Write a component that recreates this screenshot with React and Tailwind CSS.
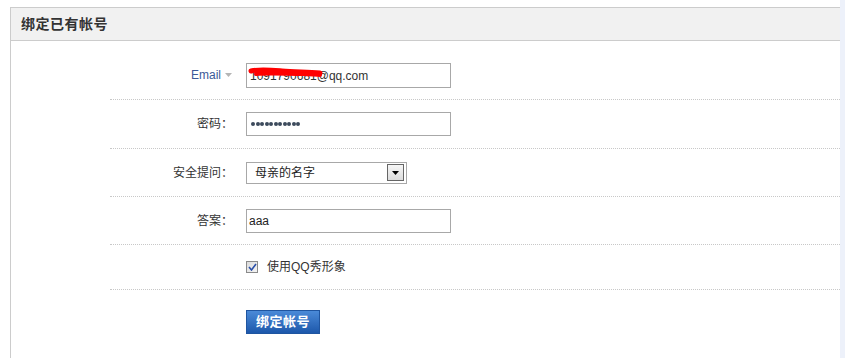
import React from "react";

const cn = { fontFamily: '"Liberation Sans", "Noto Sans CJK SC", sans-serif' };

function Row({ label, children, h = "h-[48px]", last }) {
  return (
    <div className={`flex items-center ${h} ${last ? "" : "border-b border-dotted border-[#c8c8c8]"}`}>
      <div className="w-[123px] text-right text-[12px] text-[#333]">{label}</div>
      <div className="ml-[13px] flex items-center">{children}</div>
    </div>
  );
}

export default function App() {
  return (
    <div className="w-[845px] h-[358px] bg-[#edf1fa] flex" style={cn}>
      <div className="w-[840px] h-full bg-white pt-[7px] pl-[10px]">
        <div className="h-full border-l border-t border-[#cccccc] flex flex-col">
          <div className="h-[33px] bg-[#f1f1f1] border-b border-[#cccccc] flex items-center pl-[10px]">
            <span className="text-[14px] font-bold text-[#333] tracking-[0.5px]">绑定已有帐号</span>
          </div>
          <div className="pl-[99px] pt-[10px]">
            <Row h="h-[49px]" label={
              <span className="inline-flex items-center justify-end">
                <span className="text-[#3b5998]">Email</span>
                <svg width="9" height="6" className="ml-[3px]" viewBox="0 0 9 6"><path d="M1 1h7l-3.5 4z" fill="#b5b5b5" /></svg>
              </span>
            }>
              <div className="relative w-[205px] h-[25px] border border-[#a8a8a8] bg-white flex items-center pl-[3px] pt-[2px] text-[12px] text-[#333]">
                1091790681@qq.com
                <svg className="absolute left-[1px] top-[3px]" width="76" height="12" viewBox="0 0 76 12">
                  <path d="M3 4 C12 2, 22 3, 34 4 C46 5, 58 5, 72 6" stroke="#ff0000" strokeWidth="5" fill="none" strokeLinecap="round" />
                  <path d="M8 7 C22 6, 40 7, 55 7 C62 7, 68 8, 72 8" stroke="#ff0000" strokeWidth="4" fill="none" strokeLinecap="round" />
                </svg>
              </div>
            </Row>
            <Row label="密码：" h="h-[49px]">
              <div className="w-[205px] h-[24px] border border-[#a8a8a8] bg-white flex items-center pl-[4px] gap-[0.5px]">
                {Array.from({ length: 11 }).map((_, i) => (
                  <span key={i} className="w-[4px] h-[4px] rounded-full bg-[#3c4a5c] inline-block" />
                ))}
              </div>
            </Row>
            <Row label="安全提问：" h="h-[48px]">
              <div className="w-[161px] h-[22px] border border-[#a8a8a8] bg-white flex items-center justify-between pl-[8px] pr-[2px] text-[12px] text-[#222]">
                <span>母亲的名字</span>
                <div className="w-[17px] h-[17px] border border-[#666] bg-gradient-to-b from-[#f6f6f6] to-[#dcdcdc] flex items-center justify-center">
                  <svg width="7" height="4" viewBox="0 0 7 4"><path d="M0 0h7L3.5 4z" fill="#000" /></svg>
                </div>
              </div>
            </Row>
            <Row label="答案：" h="h-[48px]">
              <div className="w-[205px] h-[24px] border border-[#a8a8a8] bg-white flex items-center pl-[2px] text-[12px] text-[#222]">
                aaa
              </div>
            </Row>
            <Row label="" h="h-[45px]">
              <div className="flex items-center">
                <div className="w-[12px] h-[12px] border border-[#8a8a8a] bg-gradient-to-br from-[#dcdcdc] to-[#f4f4f4] flex items-center justify-center">
                  <svg width="9" height="8" viewBox="0 0 9 8"><path d="M1 4l2.5 3L8 1" stroke="#2a4fa8" strokeWidth="1.6" fill="none" /></svg>
                </div>
                <span className="ml-[9px] text-[12px] text-[#333]">使用QQ秀形象</span>
              </div>
            </Row>
            <div className="flex pt-[20px]">
              <div className="w-[123px]" />
              <button className="ml-[13px] w-[74px] h-[24px] border border-[#1f55a0] bg-gradient-to-b from-[#4a8ad8] to-[#1d58ab] text-white text-[13px] font-bold flex items-center justify-center tracking-[0.5px]">
                绑定帐号
              </button>
            </div>
          </div>
        </div>
      </div>
    </div>
  );
}
